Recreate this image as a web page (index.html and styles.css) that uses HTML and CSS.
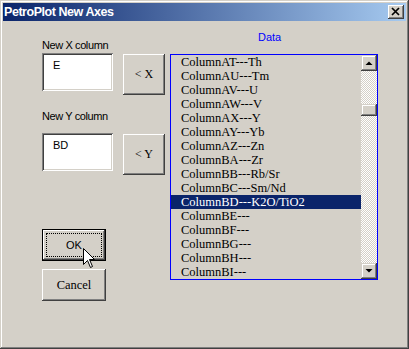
FILE: index.html
```html
<!DOCTYPE html>
<html>
<head>
<meta charset="utf-8">
<link rel="stylesheet" href="styles.css">
</head>
<body>
<div class="window">
  <div class="titlebar">
    <span class="title">PetroPlot New Axes</span>
    <div class="close"><svg width="16" height="14" viewBox="0 0 16 14"><path d="M4 3 L11 10 M11 3 L4 10" stroke="#000" stroke-width="1.7" fill="none"/></svg></div>
  </div>
  <div class="content">
    <div class="left">
      <div class="label lx">New X column</div>
      <div class="row">
        <div class="field">E</div>
        <div class="btn sbtn">&lt; X</div>
      </div>
      <div class="label ly">New Y column</div>
      <div class="row">
        <div class="field">BD</div>
        <div class="btn sbtn">&lt; Y</div>
      </div>
      <div class="btn ok"><span class="focus">OK</span></div>
      <div class="btn cancel">Cancel</div>
    </div>
    <div class="right">
      <div class="data">Data</div>
      <div class="listbox">
        <div class="items">
          <div class="item">ColumnAT---Th</div>
          <div class="item">ColumnAU---Tm</div>
          <div class="item">ColumnAV---U</div>
          <div class="item">ColumnAW---V</div>
          <div class="item">ColumnAX---Y</div>
          <div class="item">ColumnAY---Yb</div>
          <div class="item">ColumnAZ---Zn</div>
          <div class="item">ColumnBA---Zr</div>
          <div class="item">ColumnBB---Rb/Sr</div>
          <div class="item">ColumnBC---Sm/Nd</div>
          <div class="item sel">ColumnBD---K2O/TiO2</div>
          <div class="item">ColumnBE---</div>
          <div class="item">ColumnBF---</div>
          <div class="item">ColumnBG---</div>
          <div class="item">ColumnBH---</div>
          <div class="item">ColumnBI---</div>
        </div>
        <div class="scrollbar">
          <div class="sb-btn"><svg width="14" height="14" viewBox="0 0 14 14"><path d="M3.5 9 L10.5 9 L7 5.5 Z" fill="#000"/></svg></div>
          <div class="track t1"></div>
          <div class="thumb"></div>
          <div class="track t2"></div>
          <div class="sb-btn"><svg width="14" height="14" viewBox="0 0 14 14"><path d="M3.5 5 L10.5 5 L7 8.5 Z" fill="#000"/></svg></div>
        </div>
      </div>
    </div>
  </div>
  <svg class="cursor" width="13" height="21" viewBox="0 0 13 21"><path d="M0.5 0.5 L0.5 16.5 L4.5 12.5 L7.5 19.5 L9.5 18.5 L6.5 11.5 L11.5 11.5 Z" fill="#fff" stroke="#000" stroke-width="1"/></svg>
</div>
</body>
</html>
```

FILE: styles.css
```css
html, body {
  margin: 0;
  padding: 0;
  background: #d4d0c8;
}
.window {
  position: relative;
  width: 409px;
  height: 349px;
  box-sizing: border-box;
  background: #d4d0c8;
  padding: 3px;
  box-shadow: inset -1px -1px #404040, inset 1px 1px #d4d0c8, inset -2px -2px #808080, inset 2px 2px #ffffff;
  font-family: "Liberation Sans", Arial, sans-serif;
  font-size: 11px;
  overflow: hidden;
}
.titlebar {
  height: 18px;
  background: linear-gradient(to right, #0a246a, #a6caf0);
  display: flex;
  align-items: center;
  justify-content: space-between;
  padding-left: 1px;
}
.title {
  color: #fff;
  font-weight: bold;
  font-size: 12.5px;
  letter-spacing: -0.45px;
  line-height: 18px;
}
.close {
  width: 16px;
  height: 14px;
  margin-right: 2px;
  background: #d4d0c8;
  box-shadow: inset -1px -1px #404040, inset 1px 1px #ffffff, inset -2px -2px #808080;
  display: flex;
}
.content {
  display: flex;
  padding-left: 39px;
}
.left {
  display: flex;
  flex-direction: column;
  width: 123px;
}
.label {
  line-height: 13px;
  height: 13px;
  color: #000;
  letter-spacing: -0.4px;
}
.lx { margin-top: 18px; }
.ly { margin-top: 15px; }
.row {
  display: flex;
  align-items: flex-start;
  margin-top: 1px;
  gap: 10px;
}
.ly + .row { margin-top: 10px; }
.field {
  width: 71px;
  height: 38px;
  box-sizing: border-box;
  background: #fff;
  box-shadow: inset 1px 1px #808080, inset -1px -1px #ffffff, inset 2px 2px #404040, inset -2px -2px #d4d0c8;
  padding: 6px 0 0 11px;
  font-size: 11px;
  line-height: 13px;
}
.btn {
  background: #d4d0c8;
  box-sizing: border-box;
  display: flex;
  align-items: center;
  justify-content: center;
  box-shadow: inset -1px -1px #404040, inset 1px 1px #ffffff, inset -2px -2px #808080, inset 2px 2px #d4d0c8;
}
.sbtn {
  width: 42px;
  height: 41px;
  margin-top: 1px;
  font-family: "Liberation Serif", "Times New Roman", serif;
  font-size: 12px;
}
.ok {
  margin-top: 54px;
  width: 64px;
  height: 32px;
  border: 1px solid #000;
  box-shadow: inset -1px -1px #404040, inset 1px 1px #ffffff, inset -2px -2px #808080;
  padding: 3px;
  font-size: 11px;
}
.focus {
  flex: 1;
  align-self: stretch;
  display: flex;
  align-items: center;
  justify-content: center;
  border: 1px dotted #000;
}
.cancel {
  margin-top: 8px;
  width: 64px;
  height: 32px;
  font-family: "Liberation Serif", "Times New Roman", serif;
  font-size: 12.5px;
}
.right {
  margin-left: 5px;
  display: flex;
  flex-direction: column;
}
.data {
  margin-top: 10px;
  padding-left: 88px;
  color: #0000ff;
  line-height: 13px;
  height: 13px;
}
.listbox {
  margin-top: 10px;
  width: 208px;
  height: 226px;
  box-sizing: border-box;
  border: 1px solid #0000ff;
  display: flex;
  background: #d4d0c8;
}
.items {
  width: 190px;
  display: flex;
  flex-direction: column;
}
.item {
  height: 14px;
  line-height: 14px;
  padding-left: 10px;
  font-family: "Liberation Serif", "Times New Roman", serif;
  font-size: 12.5px;
  color: #000;
  white-space: nowrap;
  overflow: hidden;
}
.item.sel {
  background: #0a246a;
  color: #fff;
}
.scrollbar {
  width: 16px;
  display: flex;
  flex-direction: column;
}
.sb-btn {
  width: 16px;
  height: 16px;
  flex: none;
  box-sizing: border-box;
  background: #d4d0c8;
  box-shadow: inset -1px -1px #404040, inset 1px 1px #d4d0c8, inset -2px -2px #808080, inset 2px 2px #ffffff;
  display: flex;
  padding: 1px;
}
.track {
  background: repeating-conic-gradient(#ffffff 0 25%, #d4d0c8 0 50%) 0 0 / 2px 2px;
}
.t1 { height: 33px; }
.t2 { flex: 1; }
.thumb {
  height: 12px;
  flex: none;
  background: #d4d0c8;
  box-shadow: inset -1px -1px #404040, inset 1px 1px #d4d0c8, inset -2px -2px #808080, inset 2px 2px #ffffff;
}
.cursor {
  position: absolute;
  left: 83px;
  top: 248px;
}
```
